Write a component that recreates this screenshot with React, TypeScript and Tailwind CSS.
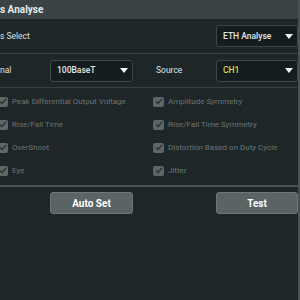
import React from "react";

function Arrow() {
  return (
    <svg width="8" height="5" viewBox="0 0 8 5" className="shrink-0">
      <path d="M0 0 H8 L4 5 Z" fill="#f2f4f4" />
    </svg>
  );
}

function Select({ value, width, yellow }: { value: string; width: string; yellow?: boolean }) {
  return (
    <div
      className={`${width} h-[22px] flex items-center justify-between pl-[6px] pr-[4px] bg-[#161d1f] border border-[#3d4749] rounded-[3px]`}
    >
      <span className={`text-[8.5px] font-medium ${yellow ? "text-[#d9dc4e]" : "text-[#e2e6e6]"}`}>{value}</span>
      <Arrow />
    </div>
  );
}

function Check({ label }: { label: string }) {
  return (
    <div className="h-[23px] flex items-center gap-[4px]">
      <div className="w-[11px] h-[10px] rounded-[2px] bg-[#5e6768] flex items-center justify-center">
        <svg width="8" height="7" viewBox="0 0 8 7">
          <path d="M1 3.5 L3 5.5 L7 1" stroke="#2a3234" strokeWidth="1.4" fill="none" />
        </svg>
      </div>
      <span className="text-[8px] text-[#6c7575]">{label}</span>
    </div>
  );
}

export default function App() {
  return (
    <div
      className="w-[300px] h-[300px] overflow-hidden bg-[#1e2628] border-r-2 border-[#475153] flex flex-col"
      style={{ fontFamily: "Roboto, 'Liberation Sans', sans-serif" }}
    >
      {/* title */}
      <div className="h-[19px] shrink-0 bg-[#3a4446] flex items-center">
        <span className="text-[10px] font-bold text-[#e8ebeb]">s Analyse</span>
      </div>

      {/* bus select */}
      <div className="h-[35px] shrink-0 flex items-center justify-between border-b border-[#384244]">
        <span className="text-[8.5px] text-[#dde1e1]">s Select</span>
        <Select value="ETH Analyse" width="w-[82px]" />
      </div>

      {/* signal / source */}
      <div className="h-[34px] shrink-0 flex items-center border-b border-[#384244]">
        <span className="w-[50px] text-[8.5px] text-[#dde1e1]">nal</span>
        <Select value="100BaseT" width="w-[83px]" />
        <span className="ml-[23px] w-[60px] text-[8.5px] text-[#dde1e1]">Source</span>
        <Select value="CH1" width="w-[82px]" yellow />
      </div>

      {/* options */}
      <div className="shrink-0 grid grid-cols-[156px_1fr] pt-[2px] pb-[3px] -ml-[3px]">
        <Check label="Peak Differential Output Voltage" />
        <Check label="Amplitude Symmetry" />
        <Check label="Rise/Fall Time" />
        <Check label="Rise/Fall Time Symmetry" />
        <Check label="OverShoot" />
        <Check label="Distortion Based on Duty Cycle" />
        <Check label="Eye" />
        <Check label="Jitter" />
      </div>

      <div className="h-[2px] shrink-0 bg-[#4a5456]" />

      <div className="flex pt-[5px]">
        <button className="ml-[50px] w-[83px] h-[22px] rounded-[3px] bg-[#5a6465] border border-[#6e7879] text-[10px] font-bold text-white">
          Auto Set
        </button>
        <button className="ml-[83px] w-[82px] h-[22px] rounded-[3px] bg-[#5a6465] border border-[#6e7879] text-[10px] font-bold text-white">
          Test
        </button>
      </div>
    </div>
  );
}
